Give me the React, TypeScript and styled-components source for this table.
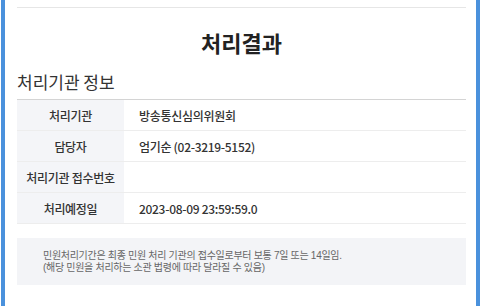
import styled, { createGlobalStyle } from "styled-components";

const GlobalStyle = createGlobalStyle`
  html, body {
    margin: 0;
    padding: 0;
    background: #fff;
  }
  body {
    font-family: "Noto Sans CJK KR", "Noto Sans", sans-serif;
    color: #333;
  }
`;

const Frame = styled.div`
  box-sizing: border-box;
  height: 306px;
  margin-left: 1px;
  border-left: 4px solid #4a91dc;
  border-right: 4px solid #4a91dc;
  padding: 7px 10px 0 12px;
  overflow: hidden;
`;

const Section = styled.section`
  border-top: 1px solid #e6e6e6;
`;

const Title = styled.h2`
  margin: 0;
  padding: 20px 0 0;
  height: 42px;
  text-align: center;
  font-size: 22px;
  line-height: 28px;
  font-weight: 700;
  color: #222;
`;

const SubTitle = styled.h3`
  margin: 0;
  height: 29px;
  font-size: 17px;
  line-height: 24px;
  font-weight: 400;
  color: #333;
`;

const InfoTable = styled.table`
  width: 100%;
  border-collapse: collapse;
  border-top: 1px solid #d4d4d4;
  font-size: 12px;
  letter-spacing: -0.3px;
`;

const Row = styled.tr`
  height: 31px;
  border-bottom: 1px solid #ededed;
`;

const HeadCell = styled.th`
  width: 107px;
  padding: 0;
  background: #f4f5f8;
  text-align: center;
  font-weight: 500;
  color: #333;
`;

const ValueCell = styled.td`
  padding: 0 0 0 15px;
  color: #333;
  font-weight: 500;
`;

const Notice = styled.div`
  margin-top: 14px;
  padding: 12px 20px 11px 26px;
  background: #f3f4f7;
  font-family: "Liberation Sans", "Noto Sans CJK KR", sans-serif;
  font-size: 10px;
  line-height: 12px;
  letter-spacing: -0.3px;
  color: #666;
`;

const rows: { label: string; value: string }[] = [
  { label: "처리기관", value: "방송통신심의위원회" },
  { label: "담당자", value: "엄기순 (02-3219-5152)" },
  { label: "처리기관 접수번호", value: "" },
  { label: "처리예정일", value: "2023-08-09 23:59:59.0" },
];

export default function App() {
  return (
    <>
      <GlobalStyle />
      <Frame>
        <Section>
          <Title>처리결과</Title>
          <SubTitle>처리기관 정보</SubTitle>
          <InfoTable>
            <tbody>
              {rows.map((r) => (
                <Row key={r.label}>
                  <HeadCell>{r.label}</HeadCell>
                  <ValueCell>{r.value}</ValueCell>
                </Row>
              ))}
            </tbody>
          </InfoTable>
          <Notice>
            민원처리기간은 최종 민원 처리 기관의 접수일로부터 보통 7일 또는 14일임.
            <br />
            (해당 민원을 처리하는 소관 법령에 따라 달라질 수 있음)
          </Notice>
        </Section>
      </Frame>
    </>
  );
}
